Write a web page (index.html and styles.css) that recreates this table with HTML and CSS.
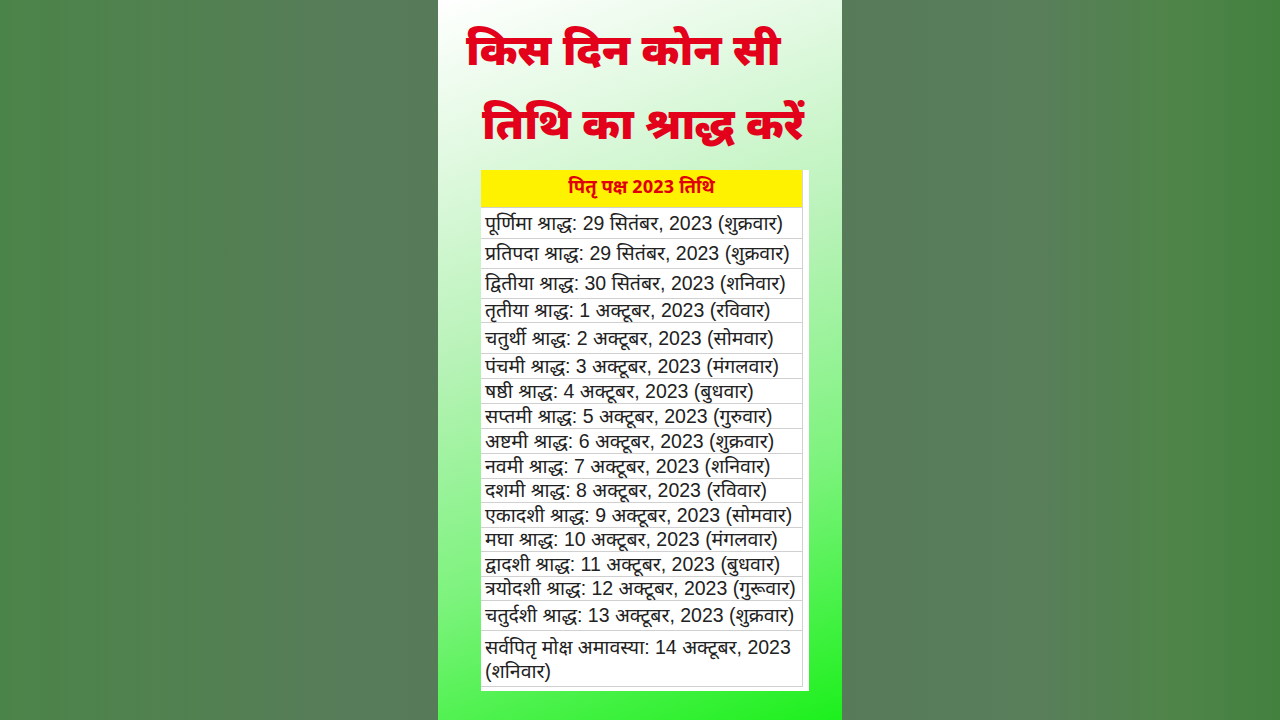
FILE: index.html
```html
<!DOCTYPE html>
<html lang="hi">
<head>
<meta charset="utf-8">
<title>पितृ पक्ष 2023 तिथि</title>
<link rel="stylesheet" href="styles.css">
</head>
<body>
<div class="stage">
  <div class="side side-left"></div>
  <main class="panel">
    <h1 class="title">
      <span class="line line-1">किस दिन कोन सी</span>
      <span class="line line-2">तिथि का श्राद्ध करें</span>
    </h1>
    <div class="sheet">
      <table class="dates">
        <thead>
          <tr><th>पितृ पक्ष 2023 तिथि</th></tr>
        </thead>
        <tbody>
          <tr class="h31"><td>पूर्णिमा श्राद्ध: 29 सितंबर, 2023 (शुक्रवार)</td></tr>
          <tr class="h30"><td>प्रतिपदा श्राद्ध: 29 सितंबर, 2023 (शुक्रवार)</td></tr>
          <tr class="h30"><td>द्वितीया श्राद्ध: 30 सितंबर, 2023 (शनिवार)</td></tr>
          <tr class="h24"><td>तृतीया श्राद्ध: 1 अक्टूबर, 2023 (रविवार)</td></tr>
          <tr class="h31"><td>चतुर्थी श्राद्ध: 2 अक्टूबर, 2023 (सोमवार)</td></tr>
          <tr class="h25"><td>पंचमी श्राद्ध: 3 अक्टूबर, 2023 (मंगलवार)</td></tr>
          <tr class="h25"><td>षष्ठी श्राद्ध: 4 अक्टूबर, 2023 (बुधवार)</td></tr>
          <tr class="h25"><td>सप्तमी श्राद्ध: 5 अक्टूबर, 2023 (गुरुवार)</td></tr>
          <tr class="h25"><td>अष्टमी श्राद्ध: 6 अक्टूबर, 2023 (शुक्रवार)</td></tr>
          <tr class="h25"><td>नवमी श्राद्ध: 7 अक्टूबर, 2023 (शनिवार)</td></tr>
          <tr class="h24"><td>दशमी श्राद्ध: 8 अक्टूबर, 2023 (रविवार)</td></tr>
          <tr class="h25"><td>एकादशी श्राद्ध: 9 अक्टूबर, 2023 (सोमवार)</td></tr>
          <tr class="h24"><td>मघा श्राद्ध: 10 अक्टूबर, 2023 (मंगलवार)</td></tr>
          <tr class="h25"><td>द्वादशी श्राद्ध: 11 अक्टूबर, 2023 (बुधवार)</td></tr>
          <tr class="h24"><td>त्रयोदशी श्राद्ध: 12 अक्टूबर, 2023 (गुरूवार)</td></tr>
          <tr class="h30"><td>चतुर्दशी श्राद्ध: 13 अक्टूबर, 2023 (शुक्रवार)</td></tr>
          <tr class="h57"><td>सर्वपितृ मोक्ष अमावस्या: 14 अक्टूबर, 2023 (शनिवार)</td></tr>
        </tbody>
      </table>
    </div>
  </main>
  <div class="side side-right"></div>
</div>
</body>
</html>
```
FILE: styles.css
```css
html, body {
  margin: 0;
  padding: 0;
  width: 1280px;
  height: 720px;
  overflow: hidden;
}
body {
  font-family: "Liberation Sans", "Noto Sans Devanagari", "Noto Sans", sans-serif;
  background: #537e52;
}
.stage {
  display: flex;
  width: 1280px;
  height: 720px;
}
.side {
  flex: 1;
}
.side-left {
  background: linear-gradient(90deg, #4b8449 0%, #518150 40%, #567c58 75%, #577b59 100%);
}
.side-right {
  background: linear-gradient(90deg, #577b59 0%, #587e5a 45%, #4f8449 75%, #43813f 100%);
}
.panel {
  width: 404px;
  height: 720px;
  box-sizing: border-box;
  background: linear-gradient(160deg, #ffffff 0%, #e2f9e2 18%, #b8f2b8 42%, #7cf37c 70%, #1cf01c 100%);
  display: flex;
  flex-direction: column;
}
.title {
  margin: 0;
  padding-top: 18px;
  color: #e2001a;
  font-family: "Noto Sans Devanagari", "Noto Sans", sans-serif;
  font-weight: 900;
  font-size: 43.5px;
  line-height: 74px;
  height: 152px;
}
.line {
  display: block;
  white-space: nowrap;
}
.line-1 { padding-left: 28px; }
.line-2 { padding-left: 44px; }
.sheet {
  margin-left: 43px;
  width: 328px;
  background: #ffffff;
  padding-bottom: 4px;
}
.dates {
  border-collapse: collapse;
  width: 322px;
}
.dates th {
  background: #fff200;
  color: #e0000a;
  font-family: "Noto Sans Devanagari", "Noto Sans", sans-serif;
  font-size: 18.5px;
  font-weight: 700;
  height: 37px;
  line-height: 24px;
  padding: 2px 0 0;
  box-sizing: border-box;
  text-align: center;
  border-right: 1px solid #d4d4d4;
}
.dates td {
  color: #222222;
  font-size: 19.5px;
  line-height: 22px;
  padding: 0 0 0 4px;
  border-top: 1px solid #d0d0d0;
  border-right: 1px solid #d0d0d0;
  white-space: normal;
  vertical-align: middle;
}
.dates tr:last-child td {
  border-bottom: 1px solid #d0d0d0;
}
.h24 td { height: 23px; }
.h25 td { height: 24px; }
.h30 td { height: 29px; }
.h31 td { height: 30px; }
.h57 td { height: 51px; vertical-align: top; padding-top: 4px; line-height: 24px; }
```
